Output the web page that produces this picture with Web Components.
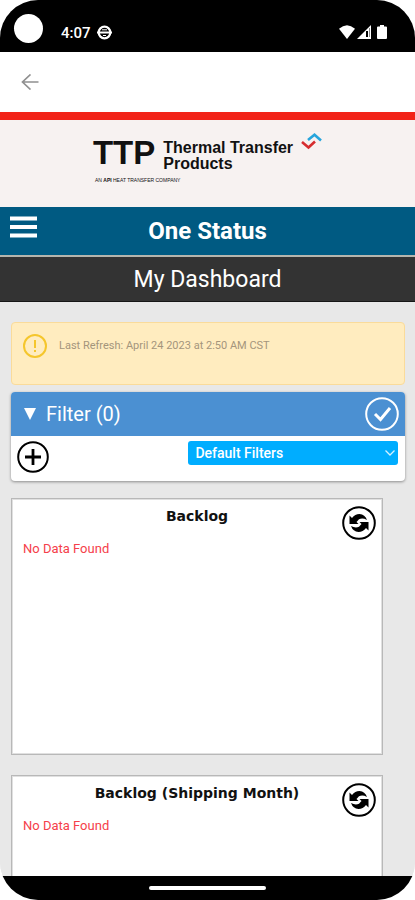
<!DOCTYPE html>
<html lang="en">
<head>
<meta charset="utf-8">
<meta name="viewport" content="width=device-width, initial-scale=1">
<title>One Status</title>
<style>
html, body { margin: 0; height: 100%; background: #fff; }
body { font-family: Roboto, "Noto Sans", sans-serif; color: #000; }
</style>
</head>
<body>
<phone-shell>
  <status-bar slot="top">4:07</status-bar>
  <back-bar></back-bar>
  <brand-banner></brand-banner>
  <app-header>One Status</app-header>
  <page-title>My Dashboard</page-title>
  <dash-board>
    <notice-box>Last Refresh: April 24 2023 at 2:50 AM CST</notice-box>
    <filter-panel>Filter (0)</filter-panel>
    <data-card><span slot="title">Backlog</span>No Data Found</data-card>
    <data-card><span slot="title">Backlog (Shipping Month)</span>No Data Found</data-card>
  </dash-board>
  <gesture-bar slot="bottom"></gesture-bar>
</phone-shell>
<script>
const define = (name, markup) => {
  const template = document.createElement('template');
  template.innerHTML = markup;
  customElements.define(name, class extends HTMLElement {
    constructor() {
      super();
      this.attachShadow({ mode: 'open' }).append(template.content.cloneNode(true));
    }
  });
};
const reset = `*{box-sizing:border-box} svg{display:block} button{display:block;background:none;border:0;padding:0;margin:0;color:inherit;font:inherit;cursor:pointer}`;

define('phone-shell', `<style>${reset}
:host{display:flex;flex-direction:column;height:100vh;overflow:hidden;border-radius:38px;background:#e8e8e8}
main{flex:1;min-height:0;overflow:hidden}
</style><slot name="top"></slot><main><slot></slot></main><slot name="bottom"></slot>`);

define('status-bar', `<style>${reset}
:host{display:flex;align-items:center;height:52px;padding:5px 28px 0 14px;box-sizing:border-box;background:#000;color:#fff;font-size:15px;font-weight:500;line-height:20px}
.camera{width:29px;height:29px;border-radius:50%;background:#fff;margin:0 18px 0 0}
.time{padding-top:8px}
.app{margin:8px auto 0 6px}
.signals{display:flex;gap:2px;padding-top:7px}
.signals svg:last-child{margin-left:4px}
</style>
<span class="camera"></span><span class="time"><slot></slot></span>
<svg class="app" width="15" height="15" viewBox="0 0 15 15" fill="none" stroke="#fff"><circle cx="7.500" cy="7.500" r="5.800" stroke-width="2.200"/><path d="M0 7.500h15" stroke-width="2.200"/><path d="M5 4.800h5M6 10.500h3" stroke-width="1"/></svg>
<span class="signals">
<svg width="16" height="14" viewBox="0 0 16 14" fill="#fff"><path d="M0 3.800Q8-3.400 16 3.800L8 14Z"/></svg>
<svg width="14" height="14" viewBox="0 0 14 14"><path d="M0 14 14 0V14Z" fill="#fff"/><path d="M10 6v6" stroke="#000" stroke-width="2"/><path d="M12.500 3v9" stroke="#888" stroke-width="1"/></svg>
<svg width="10" height="14" viewBox="0 0 10 14" fill="#fff"><path d="M3 0h4v1.400h2q1 0 1 1V13q0 1-1 1H1q-1 0-1-1V2.400q0-1 1-1h2Z"/></svg>
</span>`);

define('back-bar', `<style>${reset}
:host{display:flex;align-items:center;height:60px;padding-left:21px;background:#fff;border-bottom:8px solid #f22318}
</style><button aria-label="Back"><svg width="18" height="16" viewBox="0 0 18 16" fill="none" stroke="#909090" stroke-width="1.700"><path d="M17.500 8H1.500M9.500.5 1.500 8l8 7.500"/></svg></button>`);

define('brand-banner', `<style>${reset}
:host{display:flex;justify-content:center;height:87px;padding:12px 0 0;box-sizing:border-box;background:#f7f2f1;color:#111;font-family:"Liberation Sans",sans-serif}
.logo{display:grid;grid-template-columns:auto auto auto;grid-template-rows:42px auto;align-content:start;column-gap:8px}
.mark{font-size:33px;line-height:42px;font-weight:700}
.name{font-size:16px;line-height:16px;font-weight:700;padding-top:8px}
.name span{display:block}
.logo svg{margin-top:1px}
.sub{grid-column:1/-1;font-size:5px;line-height:8px;padding:2px 0 0 2px}
</style>
<div class="logo"><span class="mark">TTP</span><span class="name"><span>Thermal Transfer</span><span>Products</span></span>
<svg width="21" height="17" viewBox="0 0 21 17" fill="none" stroke-width="2.600"><path d="M7 7 13.500 1.800 20 7.500" stroke="#27a5dc"/><path d="M1 9 7.500 14.500 14 8.500" stroke="#d62d2f"/></svg>
<span class="sub">AN <b>API</b> HEAT TRANSFER COMPANY</span></div>`);

define('app-header', `<style>${reset}
:host{display:grid;grid-template-columns:1fr auto 1fr;align-items:center;height:48px;padding:0 9px;background:#005a82;color:#fff;border-bottom:2px solid #b5b5ad}
h1{margin:0;font-size:24px;line-height:28px;font-weight:700}
button{justify-self:start;margin-bottom:8px}
</style><button aria-label="Menu"><svg width="29" height="22" viewBox="0 0 29 22"><path d="M1 2.500h27M1 11h27M1 19.500h27" stroke="#fff" stroke-width="4"/></svg></button><h1><slot></slot></h1>`);

define('page-title', `<style>${reset}
:host{display:block;background:#333;color:#fff;border-bottom:1px solid #161616}
h2{margin:0;padding-top:1px;font-size:23px;line-height:43px;font-weight:400;text-align:center}
</style><h2><slot></slot></h2>`);

define('dash-board', `<style>:host{display:block;padding:20px 10px 20px 11px;background:#e8e8e8}</style><slot></slot>`);

define('notice-box', `<style>${reset}
:host{display:flex;gap:12px;height:63px;box-sizing:border-box;padding:11px 11px;background:#ffecbf;border:1px solid #fadb9a;border-radius:4px;color:#a4957c;font-size:11px;line-height:24px}
</style><svg width="24" height="24" viewBox="0 0 24 24" fill="none" stroke="#f5c62c" stroke-width="2"><circle cx="12" cy="12" r="11"/><path d="M12 6v8M12 16v2"/></svg><span><slot></slot></span>`);

define('filter-panel', `<style>${reset}
:host{display:block;margin:7px 0 17px;background:#fff;border-radius:4px;box-shadow:0 1px 3px #0006;overflow:hidden}
.head{display:flex;align-items:center;justify-content:space-between;height:44px;padding:0 6px 0 13px;background:#4b90d2;color:#fff}
.toggle{display:flex;align-items:center;gap:10px;font-size:20px;line-height:24px}
.row{display:flex;align-items:flex-start;justify-content:space-between;padding:5px 7px 8px 6px}
.pick{display:grid;width:55%;align-items:center}
.pick>*{grid-area:1/1}
.pick svg{justify-self:end;margin-right:3px;pointer-events:none}
select{appearance:none;width:100%;height:24px;border:0;border-radius:3px;background:#00adff;color:#fff;font:500 14px/24px Roboto,sans-serif;padding:0 20px 0 7px;margin:0}
</style>
<div class="head"><button class="toggle"><svg width="12" height="12" viewBox="0 0 12 12" fill="#fff"><path d="M0 0h12L6 12Z"/></svg><span><slot></slot></span></button>
<button aria-label="Apply filters"><svg width="34" height="34" viewBox="0 0 34 34" fill="none" stroke="#fff"><circle cx="17" cy="17" r="15.800" stroke-width="2"/><path d="m10 17 5.500 5.500L25 11" stroke-width="3"/></svg></button></div>
<div class="row"><button aria-label="Add filter"><svg width="32" height="32" viewBox="0 0 32 32" fill="none" stroke="#000"><circle cx="16" cy="16" r="14.800" stroke-width="2"/><path d="M16 8v16M8 16h16" stroke-width="2.800"/></svg></button>
<div class="pick"><select aria-label="Saved filters"><option>Default Filters</option></select><svg width="10" height="6" viewBox="0 0 10 6" fill="none" stroke="#d5f1ff" stroke-width="1.300"><path d="m.5.5 4.500 4.500L9.500.5"/></svg></div></div>`);

define('data-card', `<style>${reset}
:host{display:block;height:257px;box-sizing:border-box;margin:0 22px 20px 0;padding:7px 6px 0;background:#fff;border:1px solid #b8b8b8;box-shadow:inset 0 0 0 1px #e0e0e0}
header{display:grid;grid-template-columns:1fr auto 1fr;align-items:start}
h3{grid-column:2;margin:0;font:700 14px/20px "DejaVu Sans",sans-serif;color:#111}
button{justify-self:end}
p{margin:0;padding-left:5px;color:#f5404a;font-size:13px;line-height:18px}
</style><header><h3><slot name="title"></slot></h3><button aria-label="Refresh"><svg width="34" height="34" viewBox="0 0 34 34"><circle cx="17" cy="17" r="15.800" fill="none" stroke="#000" stroke-width="2"/><path d="M7.500 9.500 10 12Q13 8 17.500 8 23 8.300 25 14 20.500 11.500 17 13.300L14.500 16 16.500 18H7.500Z"/><path d="M26.500 24.500 24 22Q21 26 16.500 26 11 25.700 9 20 13.500 22.500 17 20.700L19.500 18 17.500 16H26.500Z"/></svg></button></header><p><slot></slot></p>`);

define('gesture-bar', `<style>:host{display:flex;justify-content:center;height:24px;background:#000;flex:none}span{width:28%;height:4px;margin-top:10px;border-radius:2px;background:#fff}</style><span></span>`);
</script>
</body>
</html>
